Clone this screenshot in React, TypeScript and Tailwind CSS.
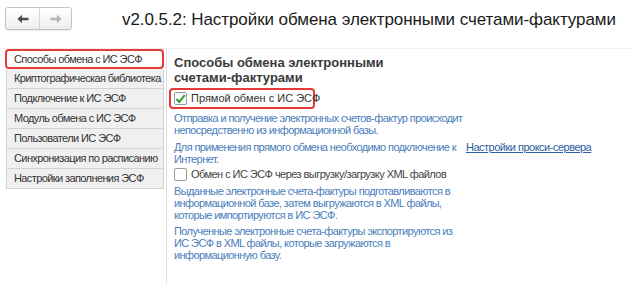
import React from "react";

const navItems = [
  "Криптографическая библиотека",
  "Подключение к ИС ЭСФ",
  "Модуль обмена с ИС ЭСФ",
  "Пользователи ИС ЭСФ",
  "Синхронизация по расписанию",
  "Настройки заполнения ЭСФ",
];

export default function App() {
  return (
    <div
      className="w-[632px] h-[284px] bg-white overflow-hidden flex flex-col"
      style={{ fontFamily: '"Liberation Sans", Arial, sans-serif' }}
    >
      {/* header */}
      <div className="h-[49px] shrink-0 flex items-start border-b border-[#efefef]">
        <div className="ml-[5px] mt-[7px] w-[67px] h-[23px] flex rounded-[3px] border border-[#c4c4c4] bg-gradient-to-b from-white to-[#eeeeee] shadow-[0_1px_1px_rgba(0,0,0,0.08)]">
          <div className="w-[34px] h-full flex items-center justify-center border-r border-[#d6d6d6]">
            <svg width="12" height="10" viewBox="0 0 12 10">
              <path d="M0.5 5 L5 0.8 L5 3.8 L11.5 3.8 L11.5 6.2 L5 6.2 L5 9.2 Z" fill="#4a4a4a" />
            </svg>
          </div>
          <div className="flex-1 h-full flex items-center justify-center">
            <svg width="12" height="10" viewBox="0 0 12 10">
              <path d="M11.5 5 L7 0.8 L7 3.8 L0.5 3.8 L0.5 6.2 L7 6.2 L7 9.2 Z" fill="#b4b4b4" />
            </svg>
          </div>
        </div>
        <div className="ml-[50px] mt-[10px] text-[17px] tracking-[-0.07px] leading-[20px] text-[#1a1a1a] whitespace-nowrap">
          v2.0.5.2: Настройки обмена электронными счетами-фактурами
        </div>
      </div>

      {/* body */}
      <div className="flex flex-1">
        {/* nav */}
        <div className="w-[167px] shrink-0 pl-[6px] pr-[2px] border-r border-[#dcdcdc] text-[11px] tracking-[-0.6px] text-[#333]">
          <div className="-ml-px h-[20px] flex items-center pl-[7px] bg-white border-2 border-[#e8393a] rounded-[4px] whitespace-nowrap">
            Способы обмена с ИС ЭСФ
          </div>
          {navItems.map((t) => (
            <div
              key={t}
              className="h-[20px] flex items-center pl-[7px] bg-[#f0f0f0] border border-t-0 border-[#d2d2d2] whitespace-nowrap"
            >
              {t}
            </div>
          ))}
        </div>

        {/* content */}
        <div className="flex-1 pl-[7px] pt-[6px] text-[11px]">
          <div className="text-[13px] leading-[15px] font-bold text-[#3a3a3a]">
            Способы обмена электронными
            <br />
            счетами-фактурами
          </div>

          <div className="-ml-[5px] mt-[3px] w-[146px] h-[21px] flex items-center border-2 border-[#e8393a] rounded-[4px]">
            <div className="ml-[3px] w-[13px] h-[13px] border border-[#9a9a9a] bg-white rounded-[2px] flex items-center justify-center">
              <svg width="11" height="10" viewBox="0 0 11 10">
                <path d="M1.5 5 L4.2 8 L9.8 1.2" stroke="#2f9a3a" strokeWidth="2" fill="none" />
              </svg>
            </div>
            <div className="ml-[2px] w-px h-[15px] bg-[#e5b35a]" />
            <span className="ml-[2px] text-[#333] whitespace-nowrap">Прямой обмен с ИС ЭСФ</span>
          </div>

          <div className="mt-[3px] leading-[12px] tracking-[-0.6px] text-[#4a7ebb] whitespace-nowrap">
            Отправка и получение электронных счетов-фактур происходит
            <br />
            непосредственно из информационной базы.
          </div>

          <div className="mt-[5px] flex items-start leading-[12px] whitespace-nowrap">
            <div className="text-[#4a7ebb] w-[292px] tracking-[-0.6px]">
              Для применения прямого обмена необходимо подключение к
              <br />
              Интернет.
            </div>
            <a className="text-[#2c5d9e] underline tracking-[-0.5px]">Настройки прокси-сервера</a>
          </div>

          <div className="mt-0 h-[18px] flex items-center">
            <div className="w-[13px] h-[13px] border border-[#9a9a9a] bg-white rounded-[2px]" />
            <span className="ml-[4px] text-[#444] tracking-[-0.55px] whitespace-nowrap">
              Обмен с ИС ЭСФ через выгрузку/загрузку XML файлов
            </span>
          </div>

          <div className="mt-[2px] leading-[12px] tracking-[-0.6px] text-[#4a7ebb] whitespace-nowrap">
            Выданные электронные счета-фактуры подготавливаются в
            <br />
            информационной базе, затем выгружаются в XML файлы,
            <br />
            которые импортируются в ИС ЭСФ.
          </div>

          <div className="mt-[4px] leading-[12px] tracking-[-0.6px] text-[#4a7ebb] whitespace-nowrap">
            Полученные электронные счета-фактуры экспортируются из
            <br />
            ИС ЭСФ в XML файлы, которые загружаются в
            <br />
            информационную базу.
          </div>
        </div>
      </div>
    </div>
  );
}
